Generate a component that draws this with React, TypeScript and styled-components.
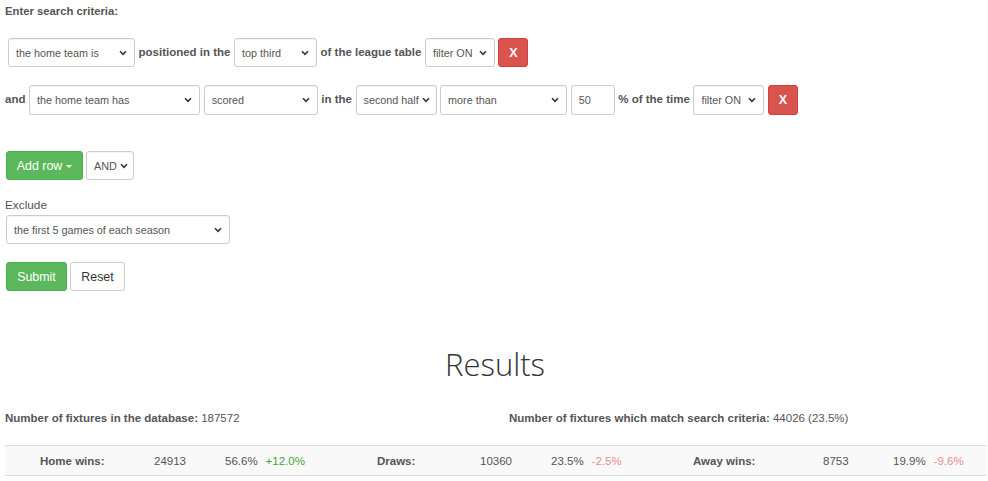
import * as React from 'react';
import styled, { createGlobalStyle } from 'styled-components';

const GlobalStyle = createGlobalStyle`
  html, body {
    margin: 0;
    padding: 0;
    background: #ffffff;
  }
  body {
    font-family: 'Liberation Sans', Arial, sans-serif;
    font-size: 12px;
    color: #555555;
  }
`;

const Page = styled.div`
  width: 988px;
  padding: 0 0 0 5px;
  box-sizing: border-box;
`;

const Heading = styled.div`
  font-weight: bold;
  font-size: 11.3px;
  color: #555;
  padding-top: 5px;
  height: 15px;
`;

const CriteriaRow = styled.div<{ top: number; indent?: number; gap?: number }>`
  display: flex;
  align-items: center;
  gap: ${props => props.gap || 4}px;
  margin-top: ${props => props.top}px;
  padding-left: ${props => props.indent || 0}px;
`;

const Label = styled.span`
  font-weight: bold;
  font-size: 11.5px;
  color: #555;
  white-space: nowrap;
  position: relative;
  top: -1px;
`;

const SelectBox = styled.div<{ w: number; h?: number }>`
  display: flex;
  align-items: center;
  justify-content: space-between;
  gap: 3px;
  width: ${props => props.w}px;
  height: ${props => props.h || 29}px;
  padding: 0 7px 0 7px;
  box-sizing: border-box;
  border: 1px solid #cccccc;
  border-radius: 3px;
  background: #fff;
  box-shadow: inset 0 1px 1px rgba(0, 0, 0, 0.05);
  font-size: 10.8px;
  color: #555;
  white-space: nowrap;
`;

const Input = styled.div<{ w: number }>`
  display: flex;
  align-items: center;
  width: ${props => props.w}px;
  height: 30px;
  padding: 0 7px;
  box-sizing: border-box;
  border: 1px solid #cccccc;
  border-radius: 3px;
  font-size: 10.8px;
  color: #555;
`;

const RemoveButton = styled.button<{ h?: number }>`
  width: 30px;
  height: ${props => props.h || 29}px;
  border: 1px solid #d43f3a;
  border-radius: 3px;
  background: #d9534f;
  color: #fff;
  font-family: 'Liberation Sans', Arial, sans-serif;
  font-weight: bold;
  font-size: 12.5px;
  padding: 0;
`;

const Button = styled.button<{ variant?: 'success' | 'default'; w: number }>`
  display: inline-flex;
  align-items: center;
  justify-content: center;
  gap: 4px;
  width: ${props => props.w}px;
  height: 29px;
  padding: 0;
  border-radius: 3px;
  font-family: 'Liberation Sans', Arial, sans-serif;
  font-size: 12.4px;
  border: 1px solid ${props => (props.variant === 'success' ? '#4cae4c' : '#cccccc')};
  background: ${props => (props.variant === 'success' ? '#5cb85c' : '#ffffff')};
  color: ${props => (props.variant === 'success' ? '#ffffff' : '#333333')};
`;

const ButtonRow = styled.div<{ top: number }>`
  display: flex;
  align-items: center;
  gap: 3px;
  margin-top: ${props => props.top}px;
  padding-left: 1px;
`;

const Caret = styled.span`
  display: inline-block;
  width: 0;
  height: 0;
  border-left: 3.5px solid transparent;
  border-right: 3.5px solid transparent;
  border-top: 3.5px solid #fff;
  margin-top: 1px;
`;

const FieldLabel = styled.div`
  margin-top: 18px;
  font-size: 11.8px;
  color: #555;
  height: 15px;
  line-height: 15px;
`;

const FieldBox = styled.div`
  margin-top: 2px;
  padding-left: 1px;
`;

const ResultsTitle = styled.h1`
  margin: 50px 0 0;
  text-align: center;
  font-family: 'Open Sans', 'Noto Sans', sans-serif;
  font-weight: 300;
  font-size: 31px;
  line-height: 46px;
  color: #333;
  padding-right: 3px;
`;

const Totals = styled.div`
  display: grid;
  grid-template-columns: 504px 1fr;
  margin-top: 23px;
  font-size: 11.5px;
  color: #555;
  height: 16px;
  line-height: 16px;
  b {
    font-weight: bold;
  }
`;

const StatsRow = styled.div`
  display: grid;
  grid-template-columns: 35px 114px 71px 152px 103px 71px 142px 130px 70px 1fr;
  align-items: center;
  width: 981px;
  height: 29px;
  margin-top: 19px;
  border-top: 1px solid #dddddd;
  border-bottom: 1px solid #dddddd;
  background: #f9f9f9;
  font-size: 11.5px;
  color: #555;
  white-space: nowrap;
`;

const StatLabel = styled.span`
  font-weight: bold;
`;

const Delta = styled.span<{ up?: boolean }>`
  margin-left: 8px;
  color: ${props => (props.up ? '#3fa33f' : '#e58f8f')};
`;

const Chevron = ({ color = '#333' }: { color?: string }) => (
  <svg width="8" height="6" viewBox="0 0 8 6" style={{ flexShrink: 0 }}>
    <path d="M1 1.3 L4 4.3 L7 1.3" fill="none" stroke={color} strokeWidth="1.6" />
  </svg>
);

const Select = ({ w, h, children }: { w: number; h?: number; children: React.ReactNode }) => (
  <SelectBox w={w} h={h}>
    <span>{children}</span>
    <Chevron />
  </SelectBox>
);

const App = () => (
  <Page>
    <GlobalStyle />
    <Heading>Enter search criteria:</Heading>

    <CriteriaRow top={18} indent={3} gap={3.5}>
      <Select w={127}>the home team is</Select>
      <Label>positioned in the</Label>
      <Select w={83}>top third</Select>
      <Label>of the league table</Label>
      <Select w={70}>filter ON</Select>
      <RemoveButton>X</RemoveButton>
    </CriteriaRow>

    <CriteriaRow top={18} gap={3.6}>
      <Label>and</Label>
      <Select w={171} h={30}>the home team has</Select>
      <Select w={114} h={30}>scored</Select>
      <Label>in the</Label>
      <Select w={81} h={30}>second half</Select>
      <Select w={127} h={30}>more than</Select>
      <Input w={44}>50</Input>
      <Label>% of the time</Label>
      <Select w={71} h={30}>filter ON</Select>
      <RemoveButton h={30}>X</RemoveButton>
    </CriteriaRow>

    <ButtonRow top={36}>
      <Button variant="success" w={77}>
        Add row <Caret />
      </Button>
      <Select w={48}>AND</Select>
    </ButtonRow>

    <FieldLabel>Exclude</FieldLabel>
    <FieldBox>
      <Select w={224} h={29}>the first 5 games of each season</Select>
    </FieldBox>

    <ButtonRow top={18}>
      <Button variant="success" w={61}>
        Submit
      </Button>
      <Button w={55}>Reset</Button>
    </ButtonRow>

    <ResultsTitle>Results</ResultsTitle>

    <Totals>
      <div>
        <b>Number of fixtures in the database:</b> 187572
      </div>
      <div>
        <b>Number of fixtures which match search criteria:</b> 44026 (23.5%)
      </div>
    </Totals>

    <StatsRow>
      <span />
      <StatLabel>Home wins:</StatLabel>
      <span>24913</span>
      <span>
        56.6%<Delta up>+12.0%</Delta>
      </span>
      <StatLabel>Draws:</StatLabel>
      <span>10360</span>
      <span>
        23.5%<Delta>-2.5%</Delta>
      </span>
      <StatLabel>Away wins:</StatLabel>
      <span>8753</span>
      <span>
        19.9%<Delta>-9.6%</Delta>
      </span>
    </StatsRow>
  </Page>
);

export default App;
